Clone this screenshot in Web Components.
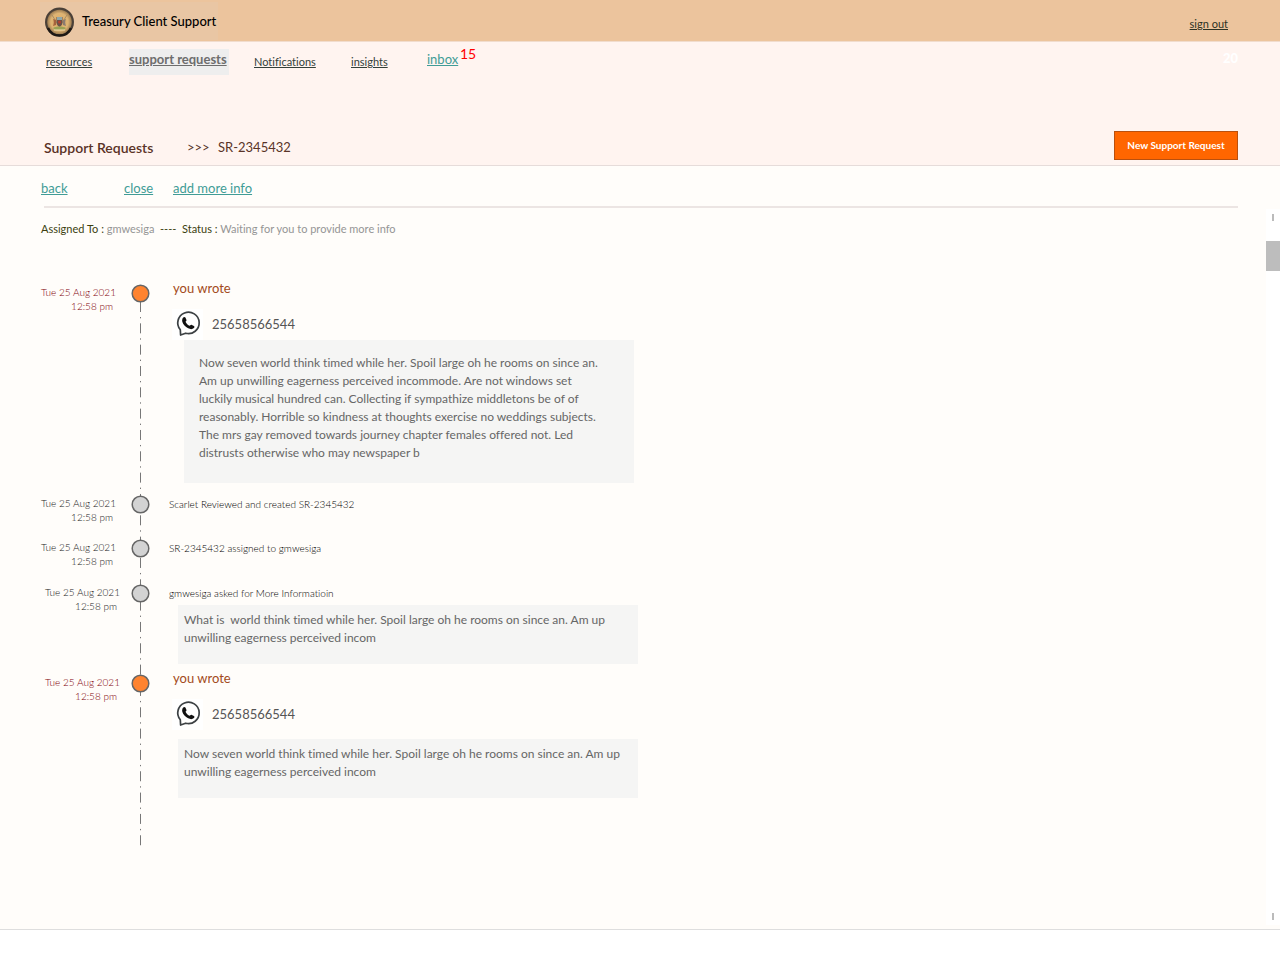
<!DOCTYPE html>
<html lang="en">
<head>
<meta charset="utf-8">
<title>Treasury Client Support</title>
<style>
  html, body { margin: 0; min-height: 100%; background: #fff; }
  body { font-family: Lato, "Liberation Sans", sans-serif; font-size: 13px; line-height: 18px; color: #000; font-variant-ligatures: none; }
</style>
</head>
<body>
<support-app></support-app>

<template id="app-header-t">
  <style>
    :host { display: flex; align-items: center; justify-content: space-between; height: 41px; padding: 0 52px 0 40px; background: #ecc49d; border-bottom: 1px solid #f1dccd; }
    .brand { display: flex; align-items: center; gap: 7px; height: 35px; padding: 3px 2px 0 4px; background: #e9c6a4; }
    h1 { margin: 0 0 3px; font-size: 13px; line-height: 18px; font-weight: 500; }
    svg { display: block; }
    a { color: #2c3224; font-size: 11px; line-height: 16px; padding-top: 7px; }
  </style>
  <div class="brand">
    <svg width="31" height="31" viewBox="0 0 31 31" aria-hidden="true">
      <defs><radialGradient id="g"><stop offset="0" stop-color="#dcae68"/><stop offset=".7" stop-color="#dfb473"/><stop offset="1" stop-color="#9a7a50"/></radialGradient></defs>
      <circle cx="15.500" cy="15" r="14.500" fill="#4a4038"/>
      <circle cx="15.500" cy="15" r="12.300" fill="url(#g)"/>
      <path d="M4 21a12.500 12.500 0 0 0 23 0" fill="none" stroke="#1d1815" stroke-width="2.500"/>
      <path d="M8 8l5 8M23 8l-5 8" stroke="#a88d64" stroke-width="1"/>
      <path d="M9 12c1 2 1 4 0 7l3-1v-5z" fill="#a5633c"/>
      <path d="M22 12c-1 2-1 4 0 7l-3-1v-5z" fill="#8c7b70"/>
      <path d="M12.500 10h6v5c0 3-1.500 4-3 5-1.500-1-3-2-3-5z" fill="#6c5248"/>
      <path d="M13 10h5v3h-5z" fill="#8fa6a8"/><circle cx="15.500" cy="15" r="1.500" fill="#b6402e"/>
      <path d="M9 21c3-2 10-2 13 0l-2 2h-9z" fill="#9aa255"/>
      <path d="M10 23h11" stroke="#f0dcb0"/>
    </svg>
    <h1>Treasury Client Support</h1>
  </div>
  <a href="#signout">sign out</a>
</template>

<template id="app-nav-t">
  <style>
    :host { display: flex; justify-content: space-between; padding: 0 42px 0 46px; height: 33px; }
    nav { display: grid; grid-template-columns: 83px 125px 97px 76px 33px auto; align-items: start; justify-items: start; }
    a { color: #33403a; font-size: 11px; line-height: 14px; margin-top: 13px; }
    a.on { box-sizing: border-box; width: 100px; height: 26px; margin-top: 7px; padding-top: 1px; background: #eee; color: #6d6d6d; font-size: 13px; line-height: 18px; font-weight: 700; white-space: nowrap; }
    a.inbox { margin-top: 8px; color: #419c96; font-size: 13px; line-height: 18px; }
    .n { margin-top: 2px; color: #f00; font-size: 14px; line-height: 20px; }
    .c { margin-top: 7px; color: #fff; font-size: 13px; line-height: 18px; font-weight: 900; }
  </style>
  <nav aria-label="Main">
    <a href="#resources">resources</a>
    <a class="on" href="#requests" aria-current="page">support requests</a>
    <a href="#notifications">Notifications</a>
    <a href="#insights">insights</a>
    <a class="inbox" href="#inbox">inbox</a><span class="n">15</span>
  </nav>
  <span class="c">20</span>
</template>

<template id="page-title-t">
  <style>
    :host { display: grid; grid-template-columns: 143px 31px 1fr auto; align-items: center; padding: 56px 42px 5px 44px; border-bottom: 1px solid #e6dcda; color: #5a3428; }
    h2 { margin: 4px 0 0; font-size: 14px; line-height: 18px; font-weight: 600; color: #5a3226; }
    span { padding-top: 2px; }
    button { width: 124px; height: 29px; padding: 0 0 2px; background: #f60; border: 1px solid #b9500e; color: #fff; font: 700 10px/14px Lato, sans-serif; }
  </style>
  <h2>Support Requests</h2><span>&gt;&gt;&gt;</span><span>SR-2345432</span>
  <button type="button">New Support Request</button>
</template>

<template id="request-actions-t">
  <style>
    :host { display: grid; grid-template-columns: 83px 49px auto; justify-content: start; margin: 0 42px 0 41px; padding-top: 13px; height: 27px; }
    a { color: #419c96; font-size: 13px; line-height: 18px; }
  </style>
  <a href="#back">back</a><a href="#close">close</a><a href="#more">add more info</a>
</template>

<template id="request-status-t">
  <style>
    :host { display: block; font-size: 11px; line-height: 16px; color: #3c3f10; }
    p { margin: 0; white-space: pre; }
    span { color: #959595; }
  </style><p>Assigned To : <span>gmwesiga</span>  ----  Status : <span>Waiting for you to provide more info</span></p></template>

<template id="scroll-rail-t">
  <style>
    :host { display: flex; flex-direction: column; justify-content: space-between; width: 14px; flex: none; background: #fff; }
    i { display: block; width: 2px; height: 7px; margin: 5px 6px; background: #bbb; }
    b { display: block; height: 30px; margin-top: 20px; background: #bdbdbd; }
  </style>
  <div><i></i><b></b></div><i></i>
</template>

<template id="time-line-t">
  <style>
    :host { display: block; position: relative; padding-bottom: 51px; }
    .rail { position: absolute; left: 92px; top: 8px; width: 15px; height: calc(100% - 8px); }
  </style>
  <svg class="rail" aria-hidden="true"><line x1="7.500" x2="7.500" y1="0" y2="100%" stroke="#777" stroke-width="1" stroke-dasharray="10 5 1.330 5" stroke-dashoffset="-10"/></svg>
  <slot></slot>
</template>

<template id="time-entry-t">
  <style>
    :host { display: grid; grid-template-columns: 73px 35px 1fr; position: relative; color: #222; }
    time { padding-top: 1px; font-size: 10px; line-height: 14px; font-weight: 300; text-align: right; white-space: nowrap; }
    time span { display: block; margin-right: 1px; }
    :host([by="you"]) time { color: #800008; }
    :host([indent]) time { position: relative; left: 4px; }
    svg { display: block; margin-left: 17px; }
    circle { fill: #d3d3d3; stroke: #666; stroke-width: 1.500; }
    :host([by="you"]) circle { fill: #ff832f; }
    .body { min-width: 0; padding-left: 20px; }
  </style>
  <time>Tue 25 Aug 2021<span>12:58 pm</span></time>
  <svg width="19" height="19" viewBox="0 0 19 19" aria-hidden="true"><circle cx="9.500" cy="9.500" r="8.300"/></svg>
  <div class="body"><slot></slot></div>
</template>

<template id="event-note-t">
  <style>:host { display: block; padding-top: 2px; height: 16px; font-size: 10px; line-height: 14px; font-weight: 300; color: #000; }</style>
  <slot></slot>
</template>

<template id="phone-author-t">
  <style>
    :host { display: block; padding-left: 3px; }
    p { margin: 0; margin-top: -5px; padding-left: 1px; color: #a34a20; font-size: 13px; line-height: 18px; }
    div { display: flex; align-items: center; gap: 9px; margin-top: 12px; color: #555; font-size: 13px; line-height: 18px; }
    svg { display: block; background: #fff; }
    span { padding-bottom: 2px; }
  </style>
  <p>you wrote</p>
  <div>
    <svg width="31" height="31" viewBox="-1 1 31 31" role="img" aria-label="WhatsApp">
      <path d="M7.600 27l-.3-5.200A10.700 10.700 0 1 1 12.600 25.200z" fill="#fff" stroke="#3c4144" stroke-width="1.700" stroke-linejoin="round"/>
      <path d="M10.200 9.600c.8-.9 1.700-.9 2.200 0l1 2.100c.3.700-.1 1.200-.9 2 .9 1.900 2.300 3.300 4.300 4.100.9-1 1.400-1.300 2.100-.9l2 1.100c.8.500.7 1.300 0 2-1.400 1.400-3.300 1.500-5.700.3-2.900-1.400-5.100-3.800-5.900-6.500-.4-1.600 0-3.200.9-4.200z" fill="#111"/>
    </svg>
    <span><slot></slot></span>
  </div>
</template>

<template id="message-box-t">
  <style>
    :host { display: block; box-sizing: border-box; max-width: 460px; min-height: 59px; margin-left: 9px; padding: 6px 2px 17px 6px; background: #f5f5f4; color: #666; font-size: 12px; line-height: 18px; }
    :host([large]) { max-width: 450px; margin-left: 15px; padding: 14px 15px 21px; }
    p { margin: 0; white-space: pre-line; }
  </style>
  <p><slot></slot></p>
</template>

<template id="support-app-t">
  <style>
    :host { display: flex; flex-direction: column; min-height: 100vh; }
    .top { background: #fff4f0; }
    main { flex: 1; display: flex; flex-direction: column; margin-bottom: 30px; padding-bottom: 4px; background: #fffdfa; border-bottom: 1px solid #dedede; }
    hr { width: auto; margin: 0 42px 0 44px; border: 0; height: 2px; background: #ece5e3; }
    .row { flex: 1; display: flex; margin-top: 1px; }
    .content { flex: 1; padding: 12px 24px 0 41px; min-width: 0; }
    time-line { margin-top: 47px; }
    .g1 { margin-bottom: 12px; }
    .g2 { margin-bottom: 15px; }
    .g3 { margin-bottom: 16px; }
    .g4 { margin-bottom: 10px; }
    .gap { margin-top: 9px; }
    .drop { margin-top: 3px; }
  </style>
  <app-header></app-header>
  <div class="top"><app-nav></app-nav><page-title></page-title></div>
  <main>
    <request-actions></request-actions>
    <hr>
    <div class="row">
      <div class="content">
        <request-status></request-status>
        <time-line role="list">
          <time-entry class="g1" by="you" role="listitem">
            <phone-author>25658566544</phone-author>
            <message-box large>Now seven world think timed while her. Spoil large oh he rooms on since an.
Am up unwilling eagerness perceived incommode. Are not windows set
luckily musical hundred can. Collecting if sympathize middletons be of of
reasonably. Horrible so kindness at thoughts exercise no weddings subjects.
The mrs gay removed towards journey chapter females offered not. Led
distrusts otherwise who may newspaper b</message-box>
          </time-entry>
          <time-entry class="g2" role="listitem"><event-note>Scarlet Reviewed and created SR-2345432</event-note></time-entry>
          <time-entry class="g3" role="listitem"><event-note>SR-2345432 assigned to gmwesiga</event-note></time-entry>
          <time-entry class="g4" indent role="listitem"><event-note>gmwesiga asked for More Informatioin</event-note>
            <message-box class="drop">What is &nbsp;world think timed while her. Spoil large oh he rooms on since an. Am up
unwilling eagerness perceived incom</message-box>
          </time-entry>
          <time-entry by="you" indent role="listitem">
            <phone-author>25658566544</phone-author>
            <message-box class="gap">Now seven world think timed while her. Spoil large oh he rooms on since an. Am up
unwilling eagerness perceived incom</message-box>
          </time-entry>
        </time-line>
      </div>
      <scroll-rail></scroll-rail>
    </div>
  </main>
</template>

<script>
  const define = name => customElements.define(name, class extends HTMLElement {
    constructor() {
      super();
      this.attachShadow({ mode: 'open' }).append(document.getElementById(name + '-t').content.cloneNode(true));
    }
  });
  ['app-header', 'app-nav', 'page-title', 'request-actions', 'request-status', 'scroll-rail', 'time-line',
   'time-entry', 'event-note', 'phone-author', 'message-box', 'support-app'].forEach(define);
</script>
</body>
</html>
